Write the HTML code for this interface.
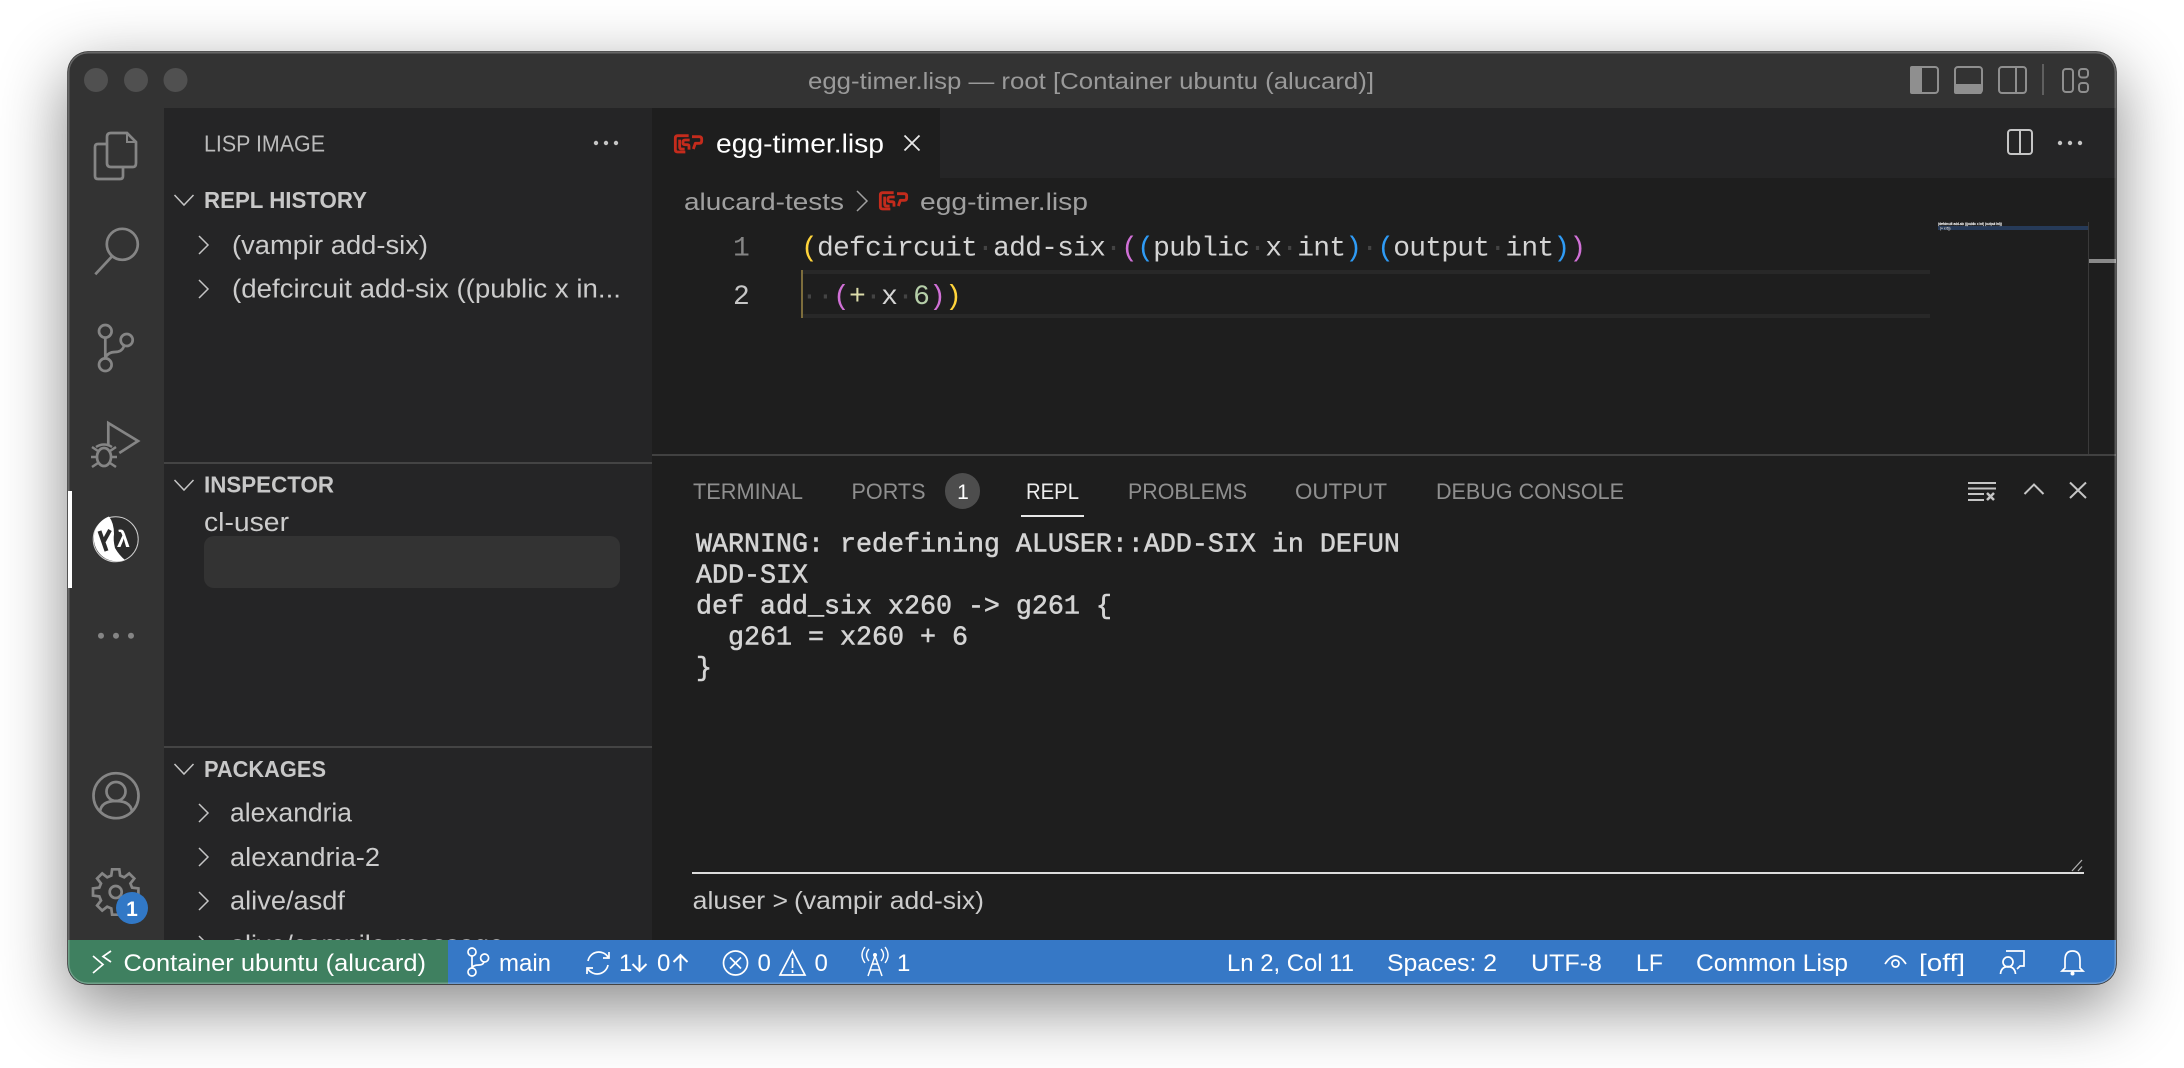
<!DOCTYPE html>
<html lang="en">
<head>
<meta charset="utf-8">
<title>egg-timer.lisp — root [Container ubuntu (alucard)]</title>
<style>
html,body{margin:0;padding:0;width:2184px;height:1068px;background:#fff;overflow:hidden}
#win{position:absolute;left:68px;top:52px;width:2048px;height:932px;border-radius:20px;overflow:hidden;background:#1e1e1e;box-shadow:0 22px 66px 2px rgba(0,0,0,.46)}
#layer{position:absolute;left:-68px;top:-52px;width:2184px;height:1068px}
#layer>div{position:absolute}
#edge{position:absolute;left:68px;top:52px;width:2048px;height:932px;border-radius:20px;box-shadow:inset 0 0 0 1.500px rgba(255,255,255,.26),0 0 0 .7px #222;box-sizing:border-box;pointer-events:none}
svg{position:absolute;left:0;top:0}
text{font-family:"Liberation Sans",sans-serif;white-space:pre}
.s{font-size:25.500px;fill:#cccccc}
.h{font-size:23.500px;font-weight:bold;fill:#c8c8c8}
.p{font-size:22.500px;fill:#8f8f8f}
.b{font-size:24px;fill:#ffffff}
.m{font-family:"Liberation Mono",monospace;font-size:28px;letter-spacing:-.8px;fill:#d4d4d4}
.r{font-family:"Liberation Mono",monospace;font-size:26.667px;fill:#d4d4d4;stroke:#d4d4d4;stroke-width:.55}
.d{fill:#444}.y{fill:#ffd43b}.v{fill:#d070d6}.u{fill:#2f9bf5}
.ic{fill:none;stroke:#858585;stroke-width:2.700}
.ti{fill:none;stroke:#8f8f8f;stroke-width:2}
.w{fill:none;stroke:#fff;stroke-width:1.700}
.ch{fill:none;stroke:#c5c5c5;stroke-width:1.500}
.l{fill:none;stroke:#c42b1c;stroke-linejoin:round}
</style>
</head>
<body>
<div id="win"><div id="layer">
  <div style="left:68px;top:52px;width:2048px;height:56px;background:#333"></div>
  <div style="left:68px;top:108px;width:96px;height:832px;background:#333"></div>
  <div style="left:164px;top:108px;width:488px;height:832px;background:#252526"></div>
  <div style="left:652px;top:108px;width:1464px;height:70px;background:#252526"></div>
  <div style="left:652px;top:108px;width:288px;height:70px;background:#1e1e1e"></div>
  <div style="left:68px;top:491px;width:4px;height:97px;background:#fff"></div>
  <div style="left:164px;top:462px;width:488px;height:2px;background:#444"></div>
  <div style="left:164px;top:746px;width:488px;height:2px;background:#444"></div>
  <div style="left:204px;top:536px;width:416px;height:52px;border-radius:10px;background:#333"></div>
  <div style="left:802px;top:270px;width:1128px;height:48px;box-sizing:border-box;border-top:4px solid #282828;border-bottom:4px solid #282828"></div>
  <div style="left:801px;top:270px;width:2px;height:48px;background:#7d6d3c"></div>
  <div style="left:1938px;top:226px;width:150px;height:4px;background:#263a58"></div>
  <div style="left:2088px;top:222px;width:1px;height:232px;background:#3a3a3a"></div>
  <div style="left:2089px;top:259px;width:27px;height:4px;background:#8a8a8a"></div>
  <div style="left:652px;top:454px;width:1464px;height:2px;background:#414141"></div>
  <div style="left:1021px;top:515px;width:63px;height:2px;background:#e7e7e7"></div>
  <div style="left:692px;top:872px;width:1392px;height:2px;background:#dcdcdc"></div>
  <div style="left:945px;top:473px;width:35px;height:36px;border-radius:18px;background:#4d4d4d"></div>
  <svg width="2184" height="1068" viewBox="0 0 2184 1068">
    <!-- traffic lights -->
    <circle cx="96" cy="80" r="12" fill="#505050"/><circle cx="136" cy="80" r="12" fill="#505050"/><circle cx="175.500" cy="80" r="12" fill="#505050"/>
    <text x="808" y="89" font-size="23.500" fill="#9a9a9a" textLength="566" lengthAdjust="spacingAndGlyphs">egg-timer.lisp — root [Container ubuntu (alucard)]</text>
    <!-- title icons -->
    <rect x="1911" y="67" width="27" height="26" rx="3" class="ti"/><rect x="1910" y="66" width="12" height="28" rx="2" fill="#8f8f8f"/>
    <rect x="1955" y="67" width="27" height="26" rx="3" class="ti"/><rect x="1954" y="84" width="28" height="10" rx="2" fill="#8f8f8f"/>
    <rect x="1999" y="67" width="27" height="26" rx="3" class="ti"/><path d="M2016 67V93" class="ti"/>
    <path d="M2043 64V95" fill="none" stroke="#6e6e6e" stroke-width="1.500"/>
    <rect x="2063" y="69" width="10" height="23" rx="3" class="ti"/><rect x="2079" y="69" width="9" height="8.500" rx="3" class="ti"/><rect x="2079" y="83" width="9" height="9" rx="3" class="ti"/>

    <!-- activity bar -->
    <path d="M107 144H98Q95 144 95 147V176Q95 179 98 179H120Q123 179 123 176V167" class="ic"/>
    <path d="M111 133H127L136 142V163Q136 167 133 167H111Q107 167 107 163V137Q107 133 111 133Z" class="ic"/><path d="M127 133V142H136" fill="none" stroke="#858585" stroke-width="2"/>
    <circle cx="122.300" cy="244.300" r="15.500" class="ic"/><path d="M111.700 256.700L95.300 274.300" class="ic"/>
    <circle cx="105.300" cy="331.300" r="6.300" class="ic"/><circle cx="126.700" cy="340" r="6" class="ic"/><circle cx="105.300" cy="364.700" r="6.300" class="ic"/>
    <path d="M105.300 338V358M124 346Q122 352 115 352Q108 352 105.300 358" class="ic"/>
    <path d="M108.300 446V423L138 441L119.300 453" class="ic"/>
    <ellipse cx="104" cy="457" rx="7" ry="9" class="ic"/><path d="M96 447Q104 442 112 447M92 447L98 451M116 447L110 451M91 457H97M117 457H111M92 467L98 463M116 467L110 463" fill="none" stroke="#858585" stroke-width="2.500"/>
    <circle cx="115.700" cy="539.300" r="22.500" fill="#2c2c2c" stroke="#cfcfcf" stroke-width="1"/>
    <path d="M109 516.500A22.500 22.500 0 0 0 125 560Q119 555 115 548Q113 540 114 534Q114 523 109 516.500Z" fill="#fff"/>
    <path d="M99.500 531L106.500 551M110 530L104 541" fill="none" stroke="#2c2c2c" stroke-width="4"/>
    <text x="117" y="547" font-size="23" font-weight="bold" fill="#fff" font-family="Liberation Sans,DejaVu Sans,sans-serif">λ</text>
    <circle cx="101" cy="635.700" r="3" fill="#858585"/><circle cx="116" cy="635.700" r="3" fill="#858585"/><circle cx="131" cy="635.700" r="3" fill="#858585"/>
    <circle cx="116" cy="795.700" r="22.500" class="ic"/><circle cx="116" cy="791.500" r="9.500" class="ic"/><path d="M100 812Q101 801 116 801Q131 801 132 812" class="ic"/>
    <path transform="translate(115.700 892)" class="ic" stroke-linejoin="miter" d="M14.700 8.500L18.600 13.500L13.500 18.600L8.500 14.700L4.400 16.400L3.600 22.700L-3.600 22.700L-4.400 16.400L-8.500 14.700L-13.500 18.600L-18.600 13.500L-14.700 8.500L-16.400 4.400L-22.700 3.600L-22.700 -3.600L-16.400 -4.400L-14.700 -8.500L-18.600 -13.500L-13.500 -18.600L-8.500 -14.700L-4.400 -16.400L-3.600 -22.700L3.600 -22.700L4.400 -16.400L8.500 -14.700L13.500 -18.600L18.600 -13.500L14.700 -8.500L16.400 -4.400L22.700 -3.600L22.700 3.600L16.400 4.400Z"/>
    <circle cx="115.700" cy="892" r="6" class="ic"/>
    <circle cx="132" cy="908" r="16" fill="#3178c6"/>
    <text x="132" y="916" text-anchor="middle" font-size="21" font-weight="bold" fill="#fff">1</text>

    <!-- sidebar -->
    <text x="204" y="151.500" font-size="23.500" fill="#bbbbbb" textLength="121" lengthAdjust="spacingAndGlyphs">LISP IMAGE</text>
    <circle cx="596" cy="143" r="2.200" fill="#c5c5c5"/><circle cx="606" cy="143" r="2.200" fill="#c5c5c5"/><circle cx="616" cy="143" r="2.200" fill="#c5c5c5"/>
    <path d="M174.500 195L184 205L193.500 195" class="ch"/>
    <text x="204" y="208" class="h" textLength="163" lengthAdjust="spacingAndGlyphs">REPL HISTORY</text>
    <path d="M199 236L208 245L199 254" class="ch"/>
    <text x="232" y="254" class="s" textLength="196" lengthAdjust="spacingAndGlyphs">(vampir add-six)</text>
    <path d="M199 280L208 289L199 298" class="ch"/>
    <text x="232" y="297.700" class="s" textLength="389" lengthAdjust="spacingAndGlyphs">(defcircuit add-six ((public x in...</text>
    <path d="M174.500 480L184 490L193.500 480" class="ch"/>
    <text x="204" y="492.700" class="h" textLength="130" lengthAdjust="spacingAndGlyphs">INSPECTOR</text>
    <text x="204" y="530.800" class="s" textLength="85" lengthAdjust="spacingAndGlyphs">cl-user</text>
    <path d="M174.500 764L184 774L193.500 764" class="ch"/>
    <text x="204" y="777" class="h" textLength="122" lengthAdjust="spacingAndGlyphs">PACKAGES</text>
    <path d="M199 804L208 813L199 822" class="ch"/>
    <text x="230" y="821.700" class="s" textLength="122" lengthAdjust="spacingAndGlyphs">alexandria</text>
    <path d="M199 848L208 857L199 866" class="ch"/>
    <text x="230" y="866" class="s" textLength="150" lengthAdjust="spacingAndGlyphs">alexandria-2</text>
    <path d="M199 892L208 901L199 910" class="ch"/>
    <text x="230" y="909.500" class="s" textLength="115" lengthAdjust="spacingAndGlyphs">alive/asdf</text>
    <path d="M199 936L208 945L199 954" class="ch"/>
    <text x="230" y="953.500" class="s" textLength="274" lengthAdjust="spacingAndGlyphs">alive/compile-message</text>

    <!-- tab -->
    <g transform="translate(668 125) scale(.3333)" class="l" style="stroke-width:8.500">
      <path d="M62 32H29Q22 32 22 39V74Q22 81 29 81H52"/><path d="M35 44V66Q35 72 41 72H50"/><path d="M65 45H51Q45 45 45 51V54Q45 59 51 59H58Q63 59 63 64V74"/><path d="M72 35H94Q101 35 101 42V48Q101 55 94 55H82L76 72"/>
    </g>
    <text x="716" y="152.700" font-size="25.500" fill="#ffffff" textLength="168" lengthAdjust="spacingAndGlyphs">egg-timer.lisp</text>
    <path d="M904.500 135.500L919.500 150.500M919.500 135.500L904.500 150.500" fill="none" stroke="#e8e8e8" stroke-width="1.800"/>
    <rect x="2008" y="130" width="24" height="24" rx="3" fill="none" stroke="#c5c5c5" stroke-width="2"/><path d="M2020 130V154" stroke="#c5c5c5" stroke-width="2"/>
    <circle cx="2060" cy="143" r="2.200" fill="#c5c5c5"/><circle cx="2070" cy="143" r="2.200" fill="#c5c5c5"/><circle cx="2080" cy="143" r="2.200" fill="#c5c5c5"/>

    <!-- breadcrumbs -->
    <text x="684" y="210" font-size="24.500" fill="#a0a0a0" textLength="160" lengthAdjust="spacingAndGlyphs">alucard-tests</text>
    <path d="M857 191L867 201L857 211" fill="none" stroke="#a0a0a0" stroke-width="1.500"/>
    <g transform="translate(873 182) scale(.3333)" class="l" style="stroke-width:8.500">
      <path d="M62 32H29Q22 32 22 39V74Q22 81 29 81H52"/><path d="M35 44V66Q35 72 41 72H50"/><path d="M65 45H51Q45 45 45 51V54Q45 59 51 59H58Q63 59 63 64V74"/><path d="M72 35H94Q101 35 101 42V48Q101 55 94 55H82L76 72"/>
    </g>
    <text x="920" y="210" font-size="24.500" fill="#a0a0a0" textLength="168" lengthAdjust="spacingAndGlyphs">egg-timer.lisp</text>

    <!-- code -->
    <text x="733" y="255.500" class="m" style="fill:#858585">1</text>
    <text x="733" y="303.800" class="m" style="fill:#c6c6c6">2</text>
    <text x="801" y="255.500" class="m"><tspan class="y">(</tspan>defcircuit<tspan class="d">·</tspan>add-six<tspan class="d">·</tspan><tspan class="v">(</tspan><tspan class="u">(</tspan>public<tspan class="d">·</tspan>x<tspan class="d">·</tspan>int<tspan class="u">)</tspan><tspan class="d">·</tspan><tspan class="u">(</tspan>output<tspan class="d">·</tspan>int<tspan class="u">)</tspan><tspan class="v">)</tspan></text>
    <text x="801" y="303.800" class="m"><tspan class="d">··</tspan><tspan class="v">(</tspan><tspan style="fill:#dcdcaa">+</tspan><tspan class="d">·</tspan>x<tspan class="d">·</tspan><tspan style="fill:#b5cea8">6</tspan><tspan class="v">)</tspan><tspan class="y">)</tspan></text>
    <text x="1938" y="225" font-family="Liberation Mono,monospace" font-size="3.330" fill="#e8e8e8" stroke="#e8e8e8" stroke-width=".2">(defcircuit add-six ((public x int) (output int))</text>
    <text x="1938" y="229.500" font-family="Liberation Mono,monospace" font-size="3.330" fill="#c0c0c0" stroke="#c0c0c0" stroke-width=".15">  (+ x 6))</text>

    <!-- panel -->
    <text x="693" y="499" class="p" textLength="110" lengthAdjust="spacingAndGlyphs">TERMINAL</text>
    <text x="851.500" y="499" class="p" textLength="74" lengthAdjust="spacingAndGlyphs">PORTS</text>
    <text x="963" y="499" text-anchor="middle" font-size="21" fill="#fff">1</text>
    <text x="1026" y="499" font-size="22.500" fill="#ececec" textLength="53" lengthAdjust="spacingAndGlyphs">REPL</text>
    <text x="1128" y="499" class="p" textLength="119" lengthAdjust="spacingAndGlyphs">PROBLEMS</text>
    <text x="1295" y="499" class="p" textLength="92" lengthAdjust="spacingAndGlyphs">OUTPUT</text>
    <text x="1436" y="499" class="p" textLength="188" lengthAdjust="spacingAndGlyphs">DEBUG CONSOLE</text>
    <path d="M1968 483H1996M1968 488.500H1996M1968 494H1984M1968 500H1984" fill="none" stroke="#c5c5c5" stroke-width="2"/>
    <path d="M1987 493L1994 500M1994 493L1987 500" fill="none" stroke="#c5c5c5" stroke-width="2.500"/>
    <path d="M2024.500 494L2034 484.500L2043.500 494" fill="none" stroke="#c5c5c5" stroke-width="2"/>
    <path d="M2070 482.500L2086 498M2086 482.500L2070 498" fill="none" stroke="#c5c5c5" stroke-width="2"/>

    <text x="696" y="551.700" class="r">WARNING: redefining ALUSER::ADD-SIX in DEFUN</text>
    <text x="696" y="582.700" class="r">ADD-SIX</text>
    <text x="696" y="613.500" class="r">def add_six x260 -&gt; g261 {</text>
    <text x="696" y="644.500" class="r">  g261 = x260 + 6</text>
    <text x="696" y="675.500" class="r">}</text>
    <path d="M2072 871L2082 860M2078 871L2082 866.500" fill="none" stroke="#b0b0b0" stroke-width="1.300"/>
    <text x="692.700" y="909" font-size="25" fill="#cccccc" textLength="95.300" lengthAdjust="spacingAndGlyphs">aluser &gt;</text>
    <text x="794" y="909" font-size="25" fill="#cccccc" textLength="190" lengthAdjust="spacingAndGlyphs">(vampir add-six)</text>

    <!-- status bar -->
    <rect x="68" y="940" width="2048" height="44" fill="#3678c6"/>
    <rect x="68" y="940" width="380" height="44" fill="#3f8060"/>
    <path d="M93 956L103 964.500L93 973M111 951L103 956.500L111 962" class="w"/>
    <text x="123.500" y="971" class="b" textLength="302.500" lengthAdjust="spacingAndGlyphs">Container ubuntu (alucard)</text>
    <circle cx="472" cy="952" r="4" class="w"/><circle cx="484.600" cy="958" r="4" class="w"/><circle cx="472" cy="972" r="4" class="w"/>
    <path d="M472 956V968M484 962Q483 965 479 965Q473 965 472 968" class="w"/>
    <text x="499" y="971" class="b" textLength="52" lengthAdjust="spacingAndGlyphs">main</text>
    <path d="M588 961A11 11 0 0 1 608 957M608 965A11 11 0 0 1 588 969M603 958H609V952M593 968H587V974" class="w"/>
    <text x="619" y="971" class="b" textLength="13">1</text>
    <path d="M639.500 955V971M632.500 964L639.500 971L646.500 964" class="w" style="stroke-width:2"/>
    <text x="657" y="971" class="b" textLength="13">0</text>
    <path d="M680.500 971V955M673.500 962L680.500 955L687.500 962" class="w" style="stroke-width:2"/>
    <circle cx="735.500" cy="963" r="12" class="w"/><path d="M730 957.500L741 968.500M741 957.500L730 968.500" class="w"/>
    <text x="757.500" y="971" class="b">0</text>
    <path d="M792.500 951L805 975H780Z" class="w"/><path d="M792.500 958V968M792.500 970V973" class="w"/>
    <text x="814.500" y="971" class="b">0</text>
    <path d="M875 956L868 976M875 956L882 976M870.500 970H879.500M872 964H878" class="w" style="stroke-width:1.500"/><circle cx="875" cy="955" r="2" fill="#fff"/>
    <path d="M869 949Q864 955 869 961M881 949Q886 955 881 961M865 947Q859 955 865 963M885 947Q891 955 885 963" class="w" style="stroke-width:1.400"/>
    <text x="897" y="971" class="b" textLength="9">1</text>

    <text x="1227" y="971" class="b" textLength="127" lengthAdjust="spacingAndGlyphs">Ln 2, Col 11</text>
    <text x="1387" y="971" class="b" textLength="110" lengthAdjust="spacingAndGlyphs">Spaces: 2</text>
    <text x="1531" y="971" class="b" textLength="71" lengthAdjust="spacingAndGlyphs">UTF-8</text>
    <text x="1636" y="971" class="b" textLength="27" lengthAdjust="spacingAndGlyphs">LF</text>
    <text x="1696" y="971" class="b" textLength="152" lengthAdjust="spacingAndGlyphs">Common Lisp</text>
    <path d="M1885 964Q1895.500 948 1906 964" class="w"/><circle cx="1895.500" cy="963.500" r="3.500" class="w"/>
    <text x="1919" y="971" class="b" textLength="46" lengthAdjust="spacingAndGlyphs">[off]</text>
    <circle cx="2008" cy="962" r="5" class="w"/><path d="M2000.500 974Q2001 967 2008 966.500Q2015 967 2015.500 974" class="w"/>
    <path d="M2006 951H2024V966H2020L2017 969" class="w"/>
    <path d="M2065 968V960Q2065 951 2072.500 951Q2080 951 2080 960V968L2083 971H2062Z" class="w"/><circle cx="2072.500" cy="973.500" r="2" fill="#fff"/>
  </svg>
</div></div>
<div id="edge"></div>
</body>
</html>
